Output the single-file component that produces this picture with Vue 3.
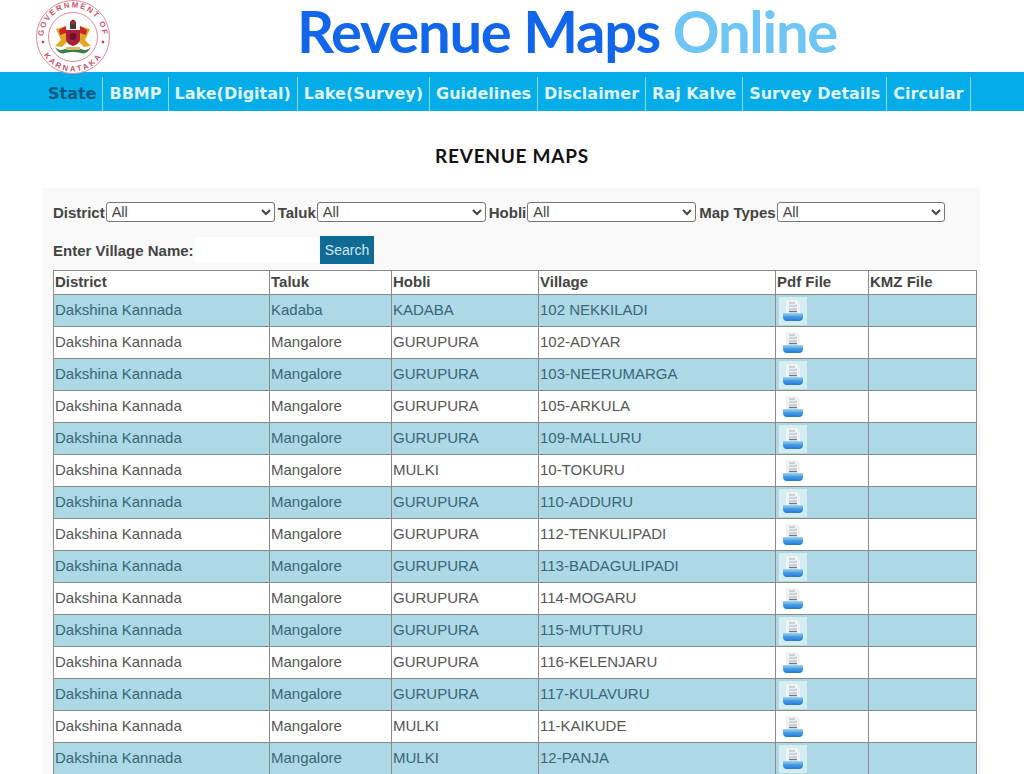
<script setup>
const navItems = ['State','BBMP','Lake(Digital)','Lake(Survey)','Guidelines','Disclaimer','Raj Kalve','Survey Details','Circular']
const rows = [
  ['Kadaba','KADABA','102 NEKKILADI'],
  ['Mangalore','GURUPURA','102-ADYAR'],
  ['Mangalore','GURUPURA','103-NEERUMARGA'],
  ['Mangalore','GURUPURA','105-ARKULA'],
  ['Mangalore','GURUPURA','109-MALLURU'],
  ['Mangalore','MULKI','10-TOKURU'],
  ['Mangalore','GURUPURA','110-ADDURU'],
  ['Mangalore','GURUPURA','112-TENKULIPADI'],
  ['Mangalore','GURUPURA','113-BADAGULIPADI'],
  ['Mangalore','GURUPURA','114-MOGARU'],
  ['Mangalore','GURUPURA','115-MUTTURU'],
  ['Mangalore','GURUPURA','116-KELENJARU'],
  ['Mangalore','GURUPURA','117-KULAVURU'],
  ['Mangalore','MULKI','11-KAIKUDE'],
  ['Mangalore','MULKI','12-PANJA'],
]
const filters = [
  { label: 'District', cls: 'w1' },
  { label: 'Taluk', cls: 'w1' },
  { label: 'Hobli', cls: 'w1' },
  { label: 'Map Types', cls: 'w2' },
]
</script>

<template>
  <div class="page">
    <header class="top">
      <svg class="seal" width="76" height="74" viewBox="0 0 76 74">
        <defs>
          <path id="arcTop" d="M8.500 37 A29.500 29.500 0 0 1 67.500 37" />
          <path id="arcBot" d="M3.500 37 A34.500 34.500 0 0 0 72.500 37" />
          <linearGradient id="bowl" x1="0" y1="0" x2="0" y2="1">
            <stop offset="0" stop-color="#a6d6f6" />
            <stop offset="0.45" stop-color="#4a9fe6" />
            <stop offset="1" stop-color="#2478d2" />
          </linearGradient>
        </defs>
        <circle cx="38" cy="37" r="36.500" fill="#fff" stroke="#dc8a98" stroke-width="1" />
        <circle cx="38" cy="37" r="24.500" fill="#fff" stroke="#dc8a98" stroke-width="1" />
        <text class="seal-text"><textPath href="#arcTop" startOffset="50%" text-anchor="middle">GOVERNMENT OF</textPath></text>
        <text class="seal-text wide"><textPath href="#arcBot" startOffset="50%" text-anchor="middle">KARNATAKA</textPath></text>
        <circle cx="8" cy="42" r="1.300" fill="#c9324a" />
        <circle cx="68" cy="42" r="1.300" fill="#c9324a" />
        <path d="M21 29 L31 26 L32 42 L27 47 L20 46 L26 40Z" fill="#e0a820" />
        <path d="M55 29 L45 26 L44 42 L49 47 L56 46 L50 40Z" fill="#e0a820" />
        <path d="M24 30 L31 26 L31 33 L25 35Z" fill="#c8282e" />
        <path d="M52 30 L45 26 L45 33 L51 35Z" fill="#c8282e" />
        <path d="M31 30 H45 V39 Q45 44 38 46 Q31 44 31 39Z" fill="#a81f3c" />
        <circle cx="38" cy="36.500" r="3.500" fill="#6a1426" />
        <path d="M35 29 V22 Q38 17 41 22 V29Z" fill="#4a3a34" />
        <path d="M36 21 H40 V24 H36Z" fill="#b5283c" />
        <path d="M20 47 Q24 52 30 49 Q38 46 46 49 Q52 52 56 47 Q52 55 46 53 Q38 51 30 53 Q24 55 20 47Z" fill="#3f7a4a" />
        <path d="M31 47 H45 V50 H31Z" fill="#d2bb6a" />
      </svg>
      <h1 class="brand"><span class="brand-a">Revenue Maps</span> <span class="brand-b">Online</span></h1>
    </header>

    <nav class="nav">
      <a v-for="(item, i) in navItems" :key="item" class="nav-item" :class="{ active: i === 0 }">{{ item }}</a>
    </nav>

    <h2 class="heading">REVENUE MAPS</h2>

    <section class="panel">
      <form class="filters" @submit.prevent>
        <template v-for="f in filters" :key="f.label">
          <label class="flabel">{{ f.label }}</label>
          <select class="fselect" :class="f.cls"><option>All</option></select>
        </template>
      </form>

      <div class="search">
        <label class="vlabel">Enter Village Name:</label>
        <input class="vinput" type="text" />
        <button class="sbtn" type="button">Search</button>
      </div>

      <table class="grid">
        <colgroup>
          <col class="c1" /><col class="c2" /><col class="c3" /><col class="c4" /><col class="c5" /><col class="c6" />
        </colgroup>
        <thead>
          <tr>
            <th>District</th><th>Taluk</th><th>Hobli</th><th>Village</th><th>Pdf File</th><th>KMZ File</th>
          </tr>
        </thead>
        <tbody>
          <tr v-for="(r, i) in rows" :key="r[2]" :class="{ alt: i % 2 === 0 }">
            <td>Dakshina Kannada</td>
            <td>{{ r[0] }}</td>
            <td>{{ r[1] }}</td>
            <td>{{ r[2] }}</td>
            <td class="pdf">
              <svg class="pdficon" width="28" height="28" viewBox="0 0 28 28">
                <rect width="28" height="28" fill="#fff" opacity="0.5" />
                <path d="M7 3 H18 L21 6 V18 H7Z" fill="#eef2f5" />
                <path d="M10 6 H16 M10 9 H18 M10 12 H18" stroke="#a8b2ba" stroke-width="1.200" />
                <path d="M10 14.500 H18" stroke="#6a7884" stroke-width="1.400" />
                <path d="M4 16 H24 V20 Q24 24 20 24 H8 Q4 24 4 20Z" fill="url(#bowl)" />
              </svg>
            </td>
            <td></td>
          </tr>
        </tbody>
      </table>
    </section>
  </div>
</template>

<style>
html, body { margin: 0; background: #fff; overflow: hidden; }
</style>

<style scoped>
.page { height: 774px; overflow: hidden; background: #fff; font-family: "Liberation Sans", Arial, sans-serif; }
.top { height: 72px; display: flex; align-items: flex-start; padding-left: 35px; box-sizing: border-box; }
.seal { flex: none; }
.seal-text { font: 700 7.800px "Liberation Sans", sans-serif; fill: #c9546a; letter-spacing: 1.700px; }
.seal-text.wide { letter-spacing: 2.400px; }
.brand { margin: 0 0 0 186px; font: 700 58px/62px "Lato", sans-serif; white-space: nowrap; letter-spacing: -1.300px; }
.brand-a { color: #1266ea; }
.brand-b { color: #6fc5f4; }
.nav { height: 39px; background: #04ace8; display: flex; padding: 5px 0 0 42px; box-sizing: border-box; }
.nav-item { font: 700 16px/34px "DejaVu Sans", sans-serif; color: #dff3fb; padding: 0 6px; border-right: 1px solid #8fdcf5; white-space: nowrap; }
.nav-item.active { color: #0a5a82; }
.heading { margin: 0; height: 77px; box-sizing: border-box; padding-top: 33px; text-align: center; font: 700 19px/24px "Lato", sans-serif; color: #111; letter-spacing: .75px; }
.panel { margin: 0 44px 0 43px; background: #f9f9f9; padding: 14px 0 0 10px; height: 600px; box-sizing: border-box; }
.filters { display: flex; align-items: center; height: 20px; }
.flabel { font-size: 15px; font-weight: 700; color: #444; white-space: nowrap; margin-right: 1px; }
.fselect { height: 20px; box-sizing: border-box; margin-right: 3px; padding: 0 0 0 1px; font: 14.500px "Liberation Sans", sans-serif; color: #444; background: #fff; border: 1px solid #767676; border-radius: 3px; }
.w1 { width: 169px; }
.w2 { width: 168px; }
.search { display: flex; align-items: center; height: 28px; margin-top: 14px; }
.vlabel { font-size: 15px; font-weight: 700; color: #444; width: 142px; }
.vinput { width: 123px; height: 26px; box-sizing: border-box; border: 0; background: #fff; padding: 0; margin-right: 2px; outline: none; }
.sbtn { width: 54px; height: 28px; border: 0; padding: 0; background: #0f6a94; color: #cfe9f6; font: 14px "Liberation Sans", sans-serif; }
.grid { border-collapse: collapse; table-layout: fixed; width: 923px; margin-top: 6px; font-size: 15px; color: #555; }
.c1 { width: 216px; } .c2 { width: 122px; } .c3 { width: 147px; } .c4 { width: 237px; } .c5 { width: 93px; } .c6 { width: 108px; }
.grid th, .grid td { border: 1px solid #8a8a8a; text-align: left; white-space: nowrap; overflow: hidden; }
.grid th { height: 21px; padding: 0 1px 2px; font-weight: 700; color: #444; background: #fff; }
.grid td { height: 29px; padding: 0 1px 2px; background: #fff; }
.grid tr.alt td { background: #add8e6; color: #3a6678; }
.grid td.pdf { padding: 0 1px; height: 31px; line-height: 0; vertical-align: middle; }
.pdficon { margin-left: 2px; display: block; }
</style>
